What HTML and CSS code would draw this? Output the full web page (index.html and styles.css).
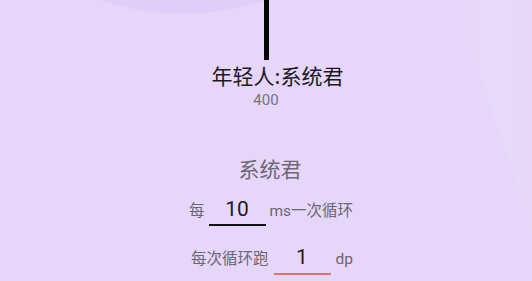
FILE: index.html
```html
<!DOCTYPE html>
<html lang="zh">
<head>
<meta charset="utf-8">
<link rel="stylesheet" href="styles.css">
</head>
<body>
<div class="screen">
  <div class="blob"></div>
  <div class="streak"></div>
  <main class="stage">
    <div class="stick"></div>
    <div class="title">年轻人:系统君</div>
    <div class="count">400</div>
    <div class="name">系统君</div>
    <div class="row row-one">
      <span class="label">每</span>
      <span class="field field-dark">10</span>
      <span class="label">ms一次循环</span>
    </div>
    <div class="row row-two">
      <span class="label">每次循环跑</span>
      <span class="field field-red">1</span>
      <span class="label">dp</span>
    </div>
  </main>
</div>
</body>
</html>
```
FILE: styles.css
```css
html, body {
  margin: 0;
  padding: 0;
}
body {
  width: 532px;
  height: 281px;
  overflow: hidden;
  background: #e6d6fa;
  font-family: Roboto, "Noto Sans CJK SC", sans-serif;
}
.screen {
  position: relative;
  width: 532px;
  height: 281px;
  overflow: hidden;
}
.blob {
  position: absolute;
  left: -73px;
  top: -498px;
  width: 512px;
  height: 512px;
  border-radius: 50%;
  background: radial-gradient(circle at 50% 60%, #dfcbf9 0%, #e2cff8 70%, #e3d2f9 100%);
}
.streak {
  position: absolute;
  left: 455px;
  top: 0;
  width: 90px;
  height: 240px;
  background: linear-gradient(90deg, rgba(234,221,251,0) 0%, rgba(234,221,251,0.5) 40%, rgba(234,221,251,0.2) 100%);
  clip-path: polygon(0 0, 100% 0, 100% 100%, 90% 100%);
}
.stage {
  position: relative;
  display: flex;
  flex-direction: column;
  align-items: center;
}
.stick {
  width: 5px;
  height: 60px;
  background: #050505;
  margin-left: 1px;
}
.title {
  margin-top: 2px;
  margin-left: 23px;
  font-family: "Noto Sans CJK SC", sans-serif;
  font-size: 21px;
  line-height: 27px;
  color: #1b1a1e;
}
.count {
  margin-top: 3px;
  font-size: 15px;
  line-height: 17px;
  color: #7a7180;
}
.name {
  margin-top: 45px;
  margin-left: 8px;
  font-family: "Noto Sans CJK SC", sans-serif;
  font-size: 21px;
  line-height: 28px;
  color: #6f6875;
}
.row {
  align-self: stretch;
  display: flex;
  align-items: baseline;
  font-family: Roboto, "Noto Sans CJK SC", sans-serif;
}
.row-one {
  margin-top: 15px;
  padding-left: 189px;
}
.row-two {
  margin-top: 19px;
  padding-left: 191px;
}
.label {
  font-size: 15.5px;
  color: #6d6673;
}
.field {
  width: 57px;
  text-align: center;
  font-size: 21px;
  line-height: 24px;
  color: #1d1b20;
}
.field-dark {
  margin: 0 4px 0 4px;
  padding-bottom: 3px;
  border-bottom: 2px solid #111014;
}
.field-red {
  margin: 0 5px 0 5px;
  padding-bottom: 4px;
  border-bottom: 2px solid #e36f72;
}
```
